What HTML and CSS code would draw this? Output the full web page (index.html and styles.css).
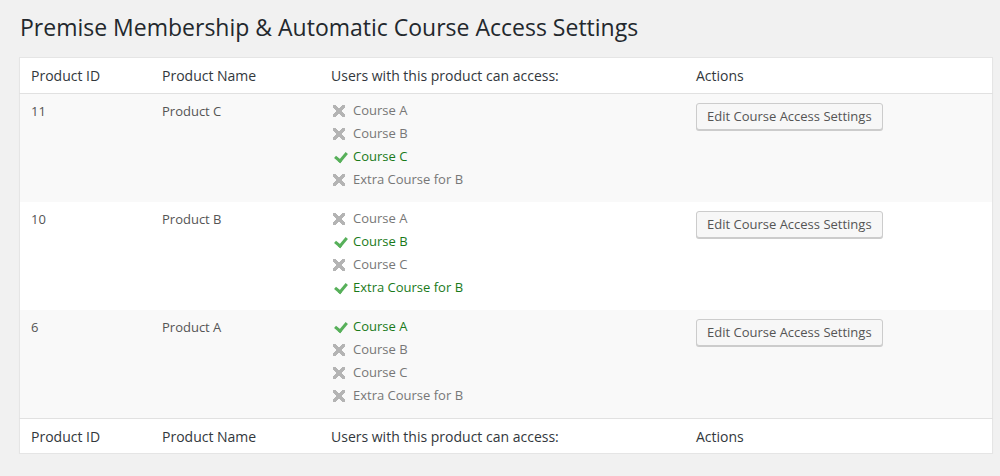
FILE: index.html
```html
<!DOCTYPE html>
<html>
<head>
<meta charset="utf-8">
<link rel="stylesheet" href="styles.css">
</head>
<body>
<div class="wrap">
  <h2 class="title">Premise Membership &amp; Automatic Course Access Settings</h2>
  <table class="list">
    <thead>
      <tr><th class="c-id">Product ID</th><th class="c-name">Product Name</th><th class="c-access">Users with this product can access:</th><th class="c-actions">Actions</th></tr>
    </thead>
    <tbody>
      <tr class="alt">
        <td>11</td><td>Product C</td>
        <td>
          <ul class="courses">
            <li class="no"><span class="ic"></span>Course A</li>
            <li class="no"><span class="ic"></span>Course B</li>
            <li class="yes"><span class="ic"></span>Course C</li>
            <li class="no"><span class="ic"></span>Extra Course for B</li>
          </ul>
        </td>
        <td><button class="btn">Edit Course Access Settings</button></td>
      </tr>
      <tr>
        <td>10</td><td>Product B</td>
        <td>
          <ul class="courses">
            <li class="no"><span class="ic"></span>Course A</li>
            <li class="yes"><span class="ic"></span>Course B</li>
            <li class="no"><span class="ic"></span>Course C</li>
            <li class="yes"><span class="ic"></span>Extra Course for B</li>
          </ul>
        </td>
        <td><button class="btn">Edit Course Access Settings</button></td>
      </tr>
      <tr class="alt">
        <td>6</td><td>Product A</td>
        <td>
          <ul class="courses">
            <li class="yes"><span class="ic"></span>Course A</li>
            <li class="no"><span class="ic"></span>Course B</li>
            <li class="no"><span class="ic"></span>Course C</li>
            <li class="no"><span class="ic"></span>Extra Course for B</li>
          </ul>
        </td>
        <td><button class="btn">Edit Course Access Settings</button></td>
      </tr>
    </tbody>
    <tfoot>
      <tr><th>Product ID</th><th>Product Name</th><th>Users with this product can access:</th><th>Actions</th></tr>
    </tfoot>
  </table>
</div>
</body>
</html>
```

FILE: styles.css
```css
html, body {
  margin: 0;
  padding: 0;
  background: #f1f1f1;
  font-family: "Open Sans", "Liberation Sans", sans-serif;
  color: #444;
}
.wrap {
  padding: 9px 7px 0 19px;
}
.title {
  margin: 0 0 11px 1px;
  font-size: 23px;
  font-weight: 400;
  line-height: 29px;
  color: #23282d;
  padding: 4px 0 4px 0;
}
.list {
  width: 974px;
  border-collapse: collapse;
  border: 1px solid #e5e5e5;
  background: #fff;
  box-shadow: 0 1px 1px rgba(0,0,0,0.04);
  table-layout: fixed;
}
.list th {
  text-align: left;
  font-weight: 400;
  font-size: 14px;
  line-height: 19px;
  color: #32373c;
  padding: 8px 10px 8px 11px;
}
.list thead th { border-bottom: 1px solid #e1e1e1; }
.list tfoot th { border-top: 1px solid #e1e1e1; padding-top: 8px; padding-bottom: 7px; }
.c-id { width: 110px; }
.c-name { width: 148px; }
.c-access { width: 344px; }
.list td {
  vertical-align: top;
  font-size: 13px;
  line-height: 23px;
  color: #555;
  padding: 5px 10px 11px 11px;
}
.list td:first-child, .list td:nth-child(2) { padding-top: 6px; }
tr.alt td { background: #f9f9f9; }
.courses {
  list-style: none;
  margin: 0;
  padding: 0 0 0 1px;
}
.courses li {
  display: flex;
  align-items: center;
  height: 23px;
}
.courses .no { color: #777; }
.courses .yes { color: #1a7a1a; }
.ic {
  display: inline-block;
  width: 15px;
  height: 15px;
  margin-right: 6px;
  flex: none;
}
.no .ic {
  background:
    linear-gradient(45deg, transparent 41%, #b4b4b4 41%, #b4b4b4 59%, transparent 59%),
    linear-gradient(-45deg, transparent 41%, #b4b4b4 41%, #b4b4b4 59%, transparent 59%);
  background-size: 12px 12px;
  background-repeat: no-repeat;
  background-position: 1px 2px;
}
.yes .ic {
  position: relative;
}
.yes .ic::after {
  content: "";
  position: absolute;
  top: 1px;
  left: 5px;
  width: 5px;
  height: 9px;
  border-right: 3px solid #57b05a;
  border-bottom: 3px solid #57b05a;
  transform: rotate(40deg);
  transform-origin: 50% 50%;
}
.btn {
  font-family: "Open Sans", "Liberation Sans", sans-serif;
  font-size: 13px;
  color: #555;
  height: 27px;
  line-height: 25px;
  padding: 0 10px;
  margin-top: 4px;
  background: #f7f7f7;
  border: 1px solid #ccc;
  border-radius: 3px;
  box-shadow: 0 1px 0 #ccc;
  cursor: pointer;
}
```
